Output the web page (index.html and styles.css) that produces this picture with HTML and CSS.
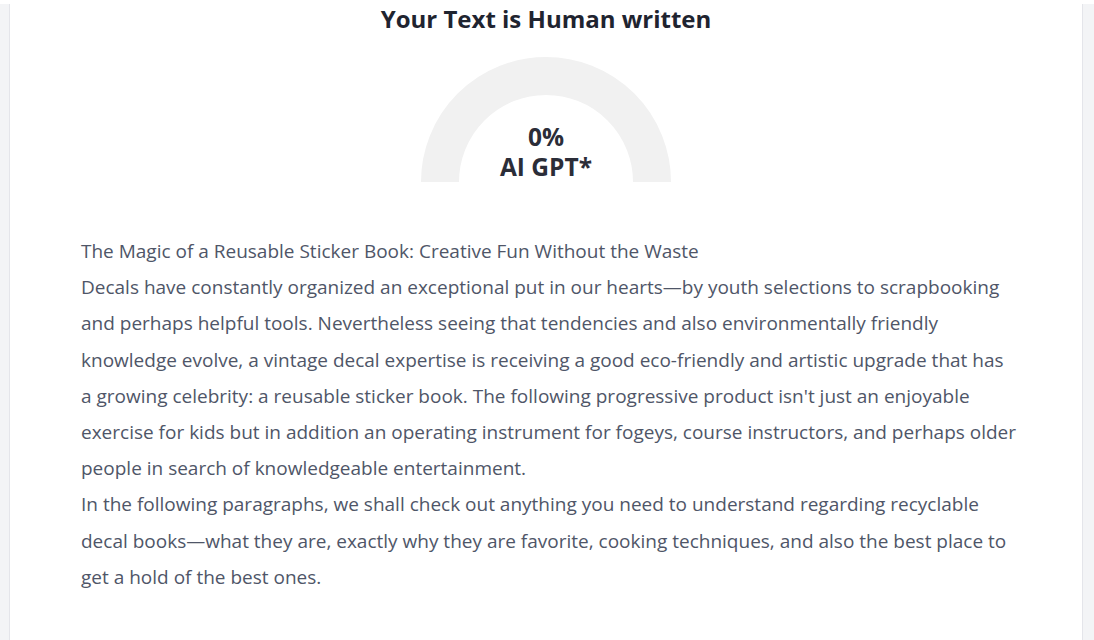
FILE: index.html
```html
<!DOCTYPE html>
<html lang="en">
<head>
<meta charset="utf-8">
<title>Result</title>
<link rel="stylesheet" href="styles.css">
</head>
<body>
<div class="page">
  <main class="card">
    <h2 class="title">Your Text is Human written</h2>
    <div class="gauge">
      <svg class="gauge-svg" width="250" height="125" viewBox="0 0 250 125">
        <path d="M 19 125 A 106 106 0 0 1 231 125" fill="none" stroke="#f1f1f1" stroke-width="38"/>
      </svg>
      <div class="gauge-label">
        <span>0%</span>
        <span>AI GPT*</span>
      </div>
    </div>
    <div class="content">
      <p>The Magic of a Reusable Sticker Book: Creative Fun Without the Waste</p>
      <p>Decals have constantly organized an exceptional put in our hearts—by youth selections to scrapbooking and perhaps helpful tools. Nevertheless seeing that tendencies and also environmentally friendly knowledge evolve, a vintage decal expertise is receiving a good eco-friendly and artistic upgrade that has a growing celebrity: a reusable sticker book. The following progressive product isn't just an enjoyable exercise for kids but in addition an operating instrument for fogeys, course instructors, and perhaps older people in search of knowledgeable entertainment.</p>
      <p>In the following paragraphs, we shall check out anything you need to understand regarding recyclable decal books—what they are, exactly why they are favorite, cooking techniques, and also the best place to get a hold of the best ones.</p>
    </div>
  </main>
</div>
</body>
</html>
```
FILE: styles.css
```css
html, body {
  margin: 0;
  padding: 0;
  background: #ffffff;
}
body {
  font-family: "Open Sans", "Noto Sans", "DejaVu Sans", sans-serif;
  overflow: hidden;
  height: 640px;
}
.page {
  margin-top: 4px;
  background: #f3f4f6;
  padding: 0 11px 0 9px;
  min-height: 636px;
  display: flex;
}
.card {
  flex: 1;
  background: #ffffff;
  border-left: 1px solid #e4e5ea;
  border-right: 1px solid #e4e5ea;
  display: flex;
  flex-direction: column;
  align-items: center;
}
.title {
  margin: -3px 0 0;
  font-size: 24px;
  line-height: 36px;
  font-weight: 700;
  color: #1f2430;
}
.gauge {
  position: relative;
  width: 250px;
  height: 125px;
  margin-top: 20px;
}
.gauge-svg {
  display: block;
}
.gauge-label {
  position: absolute;
  left: 0;
  right: 0;
  top: 65px;
  display: flex;
  flex-direction: column;
  align-items: center;
  font-size: 24.5px;
  line-height: 30px;
  font-weight: 700;
  color: #2b2d38;
}
.content {
  align-self: stretch;
  margin: 51px 64.5px 0 71px;
  font-size: 19px;
  line-height: 36.2px;
  color: #4f5668;
}
.content p {
  margin: 0;
}
```
